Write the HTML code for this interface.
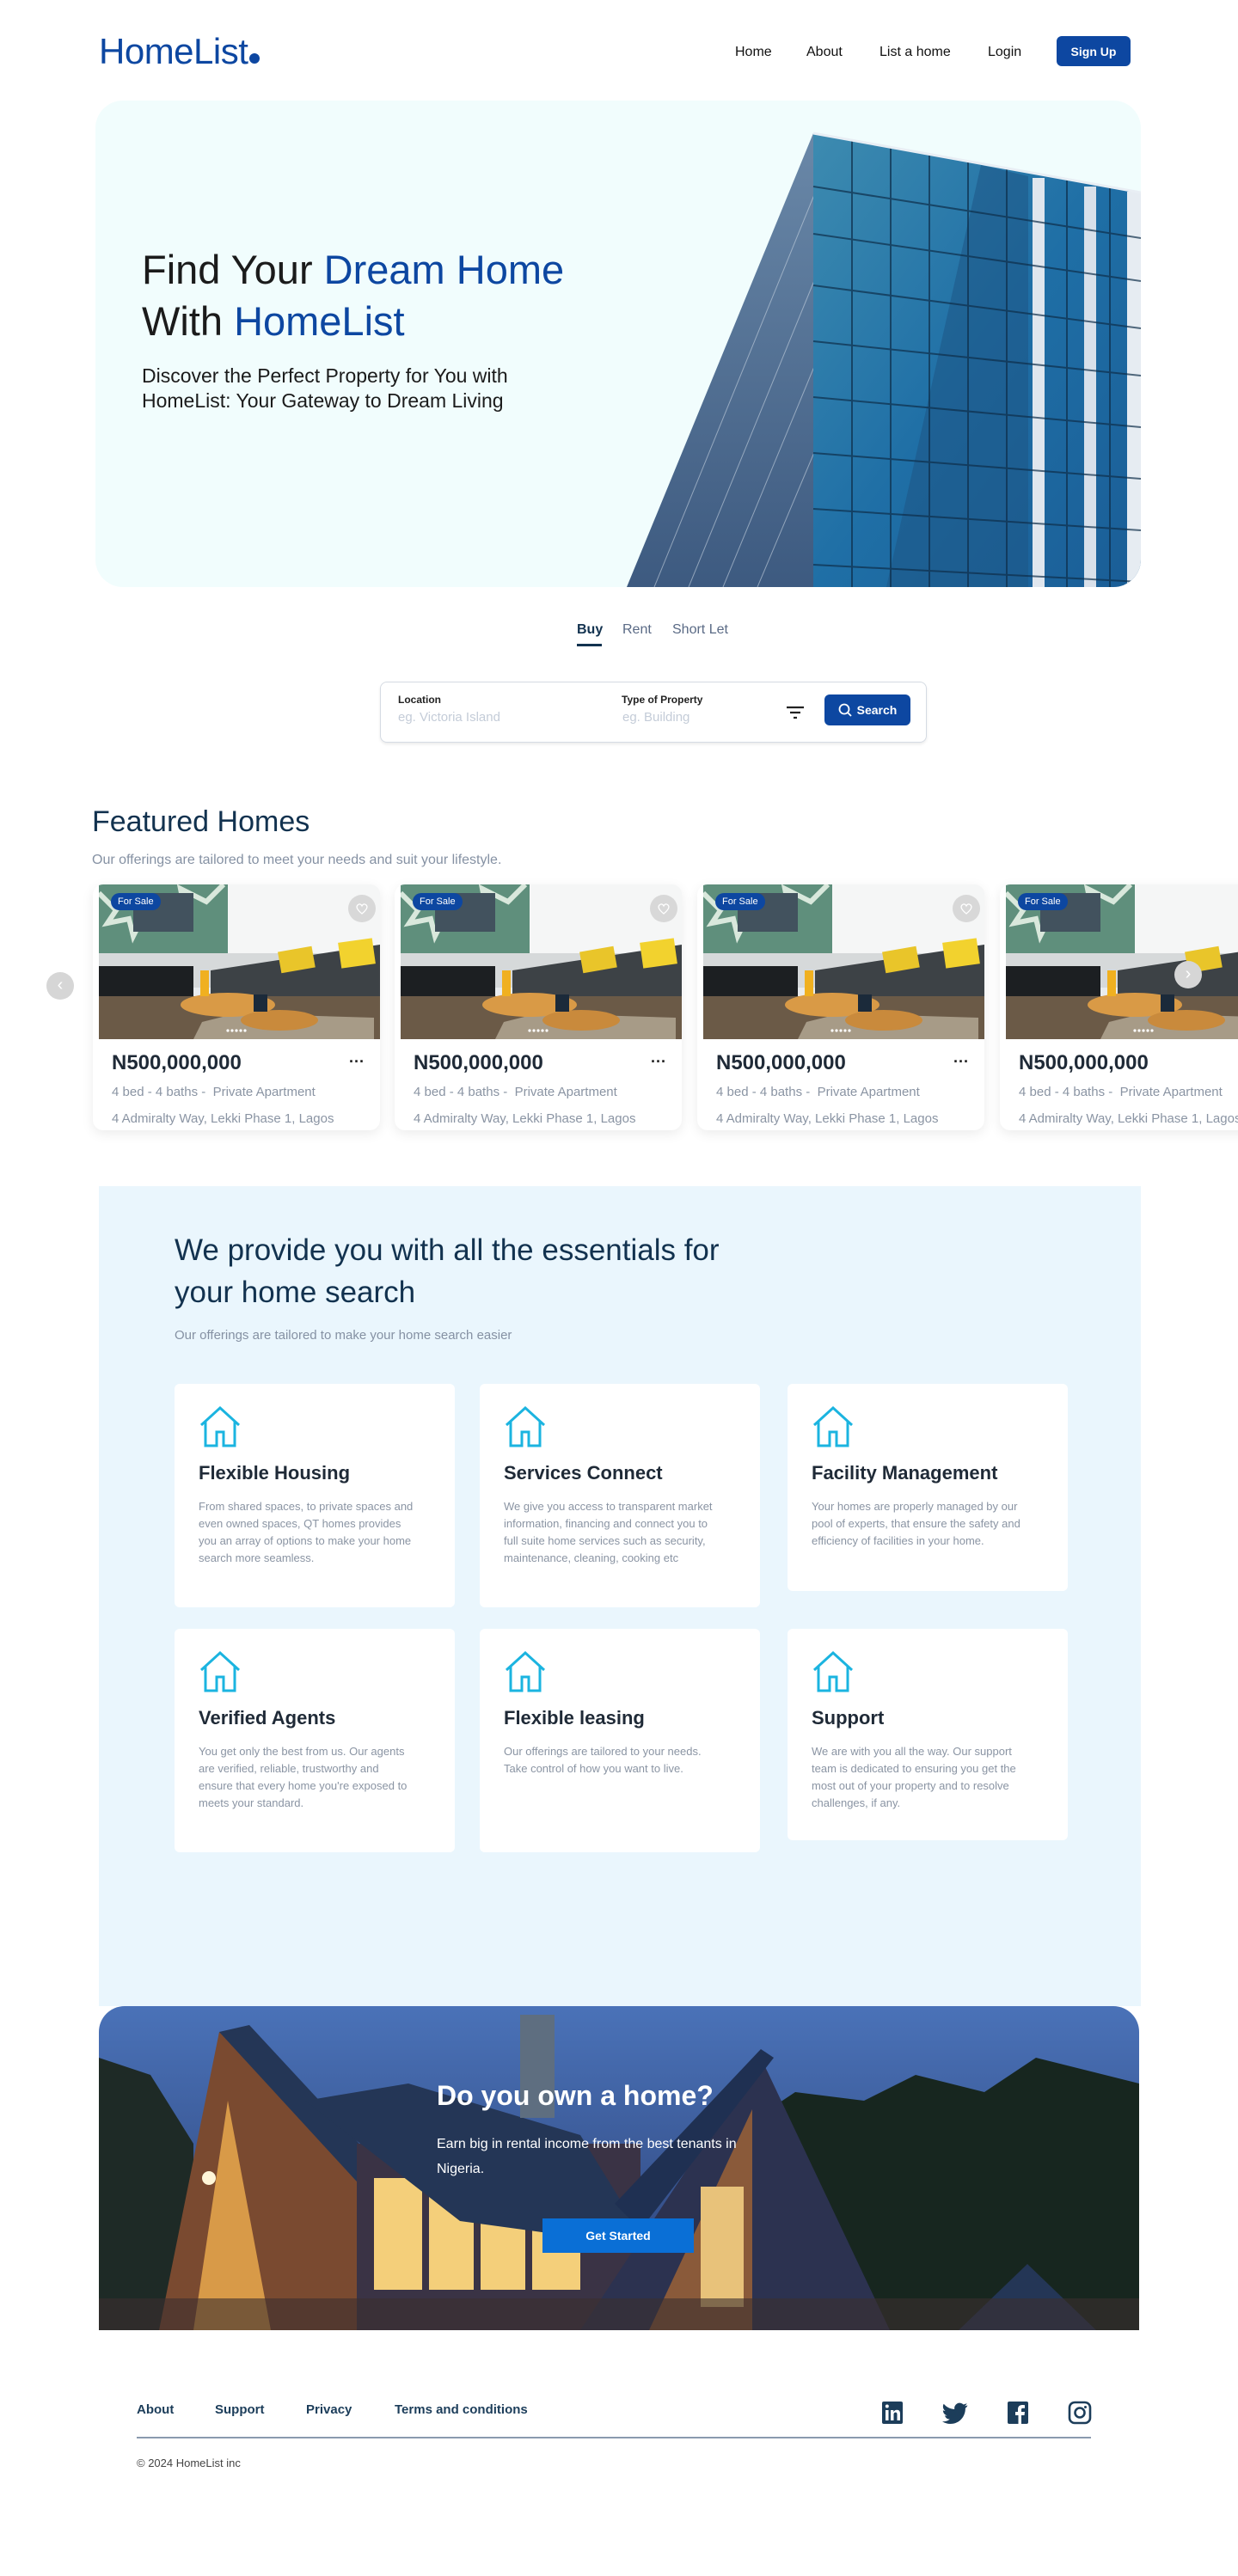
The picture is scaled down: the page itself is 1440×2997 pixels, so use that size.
<!DOCTYPE html>
<html><head><meta charset="utf-8"><style>
*{margin:0;padding:0;box-sizing:border-box}
body{width:1440px;height:2997px;background:#fff;font-family:"Liberation Sans",sans-serif;position:relative;overflow:hidden;color:#1a1a1a}
.abs{position:absolute}
.logo{left:115px;top:36px;font-size:42px;color:#0d47a1;letter-spacing:-0.5px}
.logo i{display:inline-block;width:12px;height:12px;border-radius:50%;background:#0d47a1;margin-left:2px}
.nav{top:52px;font-size:16px;color:#111}
.signup{left:1229px;top:42px;width:86px;height:35px;background:#0d47a1;color:#fff;border-radius:6px;font-size:14px;font-weight:bold;display:flex;align-items:center;justify-content:center}
.hero{left:111px;top:117px;width:1216px;height:566px;background:#f1fdfd;border-radius:32px;overflow:hidden}
.h1{left:165px;top:284px;font-size:47px;line-height:60px;color:#1b1b1b}
.h1 span{color:#0d47a1}
.hsub{left:165px;top:423px;font-size:23px;line-height:29px;color:#1b1b1b}
.tab{top:724px;font-size:16px;color:#5a6a85}
.search{left:442px;top:793px;width:636px;height:71px;border:1.5px solid #d5dbe3;border-radius:8px;box-shadow:0 2px 3px rgba(0,0,0,.08)}
.lbl{font-size:12px;font-weight:bold;color:#222;top:13px}
.ph{font-size:15px;color:#c4ccd8;top:32px}
.sbtn{left:516px;top:14px;width:100px;height:36px;background:#0d47a1;border-radius:6px;color:#fff;font-size:14px;font-weight:bold;display:flex;align-items:center;justify-content:center;gap:6px}
.fh{left:107px;top:937px;font-size:34px;color:#12324f}
.fs{left:107px;top:992px;font-size:16px;color:#8591a3}
.card{top:1029px;width:334px;height:286px;background:#fff;border-radius:12px;box-shadow:0 4px 14px rgba(0,0,0,.08);overflow:hidden}
.card .img{position:absolute;left:7px;top:0;width:327px;height:180px;overflow:hidden}
.price{position:absolute;left:22px;top:194px;font-size:24px;font-weight:bold;color:#1f2a37}
.dots{position:absolute;left:298px;top:196px;font-size:18px;font-weight:bold;color:#222}
.det{position:absolute;left:22px;font-size:15px;color:#8a94a3}
.badge{position:absolute;left:14px;top:10px;background:#0d47a1;color:#fff;font-size:11px;padding:4px 8px;border-radius:10px}
.heart{position:absolute;left:290px;top:12px;width:32px;height:32px;border-radius:50%;background:rgba(210,210,210,.85);display:flex;align-items:center;justify-content:center}
.svc{left:115px;top:1380px;width:1212px;height:954px;background:#eaf6fd}
.sh{left:203px;top:1430px;font-size:35px;line-height:49px;color:#12324f}
.ss{left:203px;top:1545px;font-size:15px;color:#8591a3}
.sc{background:#fff;border-radius:6px;width:326px;padding:26px 28px}
.sc h3{font-size:22px;color:#1f2a37;margin-top:12px;margin-bottom:16px}
.sc p{font-size:13px;line-height:20px;color:#8a94a3;width:250px}
.banner{left:115px;top:2334px;width:1210px;height:377px;border-radius:30px 30px 0 0;overflow:hidden}
.foot{top:2795px;font-size:15px;font-weight:bold;color:#1c3d5a}
</style></head><body>
<div class="abs logo">HomeList<i></i></div>
<div class="abs nav" style="left:855px">Home</div>
<div class="abs nav" style="left:938px">About</div>
<div class="abs nav" style="left:1023px">List a home</div>
<div class="abs nav" style="left:1149px">Login</div>
<div class="abs signup">Sign Up</div>

<div class="abs hero">
<svg width="1216" height="566" style="position:absolute;left:0;top:0">
<defs>
<linearGradient id="g1" x1="0" y1="0" x2="1" y2="1"><stop offset="0" stop-color="#3d8bb0"/><stop offset=".5" stop-color="#1f6fa6"/><stop offset="1" stop-color="#1a5d96"/></linearGradient>
<linearGradient id="g2" x1="0" y1="0" x2="0" y2="1"><stop offset="0" stop-color="#6a88a8"/><stop offset="1" stop-color="#3d5a80"/></linearGradient>
</defs>
<polygon points="618,566 835,38 835,566" fill="url(#g2)"/>
<g stroke="#c7d3e0" stroke-width="1" opacity=".6">
<line x1="650" y1="566" x2="840" y2="100"/><line x1="690" y1="566" x2="840" y2="200"/><line x1="730" y1="566" x2="840" y2="300"/><line x1="770" y1="566" x2="840" y2="400"/>
</g>
<polygon points="835,38 1216,107 1216,566 835,566" fill="url(#g1)"/>
<polygon points="1030,75 1085,88 1085,566 920,566" fill="#1d5585" opacity=".55"/>
<rect x="1090" y="90" width="14" height="476" fill="#dfe6ee"/>
<rect x="1150" y="100" width="14" height="466" fill="#d8e0ea"/>
<rect x="1200" y="106" width="16" height="460" fill="#e6ecf2"/>
<g stroke="#0e2e4a" stroke-width="2" opacity=".7">
<line x1="880" y1="46" x2="880" y2="566"/><line x1="925" y1="54" x2="925" y2="566"/><line x1="970" y1="62" x2="970" y2="566"/><line x1="1015" y1="70" x2="1015" y2="566"/><line x1="1060" y1="80" x2="1060" y2="566"/><line x1="1130" y1="92" x2="1130" y2="566"/><line x1="1180" y1="100" x2="1180" y2="566"/>
<line x1="835" y1="100" x2="1216" y2="160"/><line x1="835" y1="155" x2="1216" y2="210"/><line x1="835" y1="215" x2="1216" y2="265"/><line x1="835" y1="280" x2="1216" y2="320"/><line x1="835" y1="345" x2="1216" y2="380"/><line x1="835" y1="410" x2="1216" y2="440"/><line x1="835" y1="475" x2="1216" y2="500"/><line x1="835" y1="540" x2="1216" y2="560"/>
</g>
<line x1="835" y1="38" x2="1216" y2="107" stroke="#e8eef4" stroke-width="3"/>
</svg>
</div>
<div class="abs h1">Find Your <span>Dream Home</span><br>With <span>HomeList</span></div>
<div class="abs hsub">Discover the Perfect Property for You with<br>HomeList: Your Gateway to Dream Living</div>

<div class="abs tab" style="left:671px;color:#12324f;font-weight:bold">Buy</div>
<div class="abs" style="left:671px;top:749px;width:29px;height:3px;background:#12324f"></div>
<div class="abs tab" style="left:724px">Rent</div>
<div class="abs tab" style="left:782px">Short Let</div>

<div class="abs search">
<div class="abs lbl" style="left:20px">Location</div>
<div class="abs ph" style="left:20px">eg. Victoria Island</div>
<div class="abs lbl" style="left:280px">Type of Property</div>
<div class="abs ph" style="left:281px">eg. Building</div>
<svg class="abs" style="left:470px;top:25px" width="24" height="20"><path d="M2 4h20M6 10h12M10 16h4" stroke="#222" stroke-width="2.2"/></svg>
<div class="abs sbtn"><svg width="16" height="16"><circle cx="7" cy="7" r="5.5" stroke="#fff" stroke-width="1.8" fill="none"/><path d="M11 11l4 4" stroke="#fff" stroke-width="1.8"/></svg>Search</div>
</div>

<div class="abs fh">Featured Homes</div>
<div class="abs fs">Our offerings are tailored to meet your needs and suit your lifestyle.</div>

<svg width="0" height="0" style="position:absolute"><defs>
<symbol id="room" viewBox="0 0 327 180">
<rect width="327" height="180" fill="#e9ecee"/>
<rect x="0" y="0" width="150" height="80" fill="#5f8f7c"/>
<path d="M0 10l20 20-10 15 25-5 5 20 15-30 20 15 5-25 20 10-5-25 30 15 20-20" stroke="#d9e8dc" stroke-width="6" fill="none"/>
<rect x="150" y="0" width="177" height="90" fill="#f5f6f6"/>
<rect x="40" y="10" width="70" height="45" fill="#42525e"/>
<rect x="0" y="80" width="327" height="40" fill="#d6d9da"/>
<rect x="0" y="95" width="110" height="40" fill="#1c1f22"/>
<path d="M130 100l197-30v70H130z" fill="#3d4246"/>
<rect x="210" y="75" width="40" height="25" fill="#e9c52a" transform="rotate(-10 230 88)"/>
<rect x="280" y="65" width="40" height="30" fill="#f2d22e" transform="rotate(-8 300 80)"/>
<rect x="0" y="130" width="327" height="50" fill="#6b5a47"/>
<path d="M120 160l40-10 160 5v25H110z" fill="#a79b87"/>
<ellipse cx="150" cy="140" rx="55" ry="14" fill="#d99a46"/>
<ellipse cx="210" cy="158" rx="45" ry="12" fill="#c98a3c"/>
<rect x="118" y="100" width="10" height="30" fill="#f0b020"/>
<rect x="180" y="128" width="16" height="20" fill="#1b2a3a"/>
<g fill="#fff"><circle cx="150" cy="170" r="1.6"/><circle cx="155" cy="170" r="1.6"/><circle cx="160" cy="170" r="1.6"/><circle cx="165" cy="170" r="1.6"/><circle cx="170" cy="170" r="1.6"/></g>
</symbol></defs></svg>

<div class="abs card" style="left:108px"><div class="img"><svg width="327" height="180"><use href="#room"/></svg><div class="badge">For Sale</div><div class="heart"><svg width="16" height="16"><path d="M8 14C2 9 1 6 3 4s4-1 5 1c1-2 3-3 5-1s1 5-5 10z" stroke="#fff" stroke-width="1.3" fill="none"/></svg></div></div>
<div class="price">N500,000,000</div><div class="dots">···</div><div class="det" style="top:233px">4 bed - 4 baths -&nbsp; Private Apartment</div><div class="det" style="top:264px">4 Admiralty Way, Lekki Phase 1, Lagos</div></div>
<div class="abs card" style="left:459px"><div class="img"><svg width="327" height="180"><use href="#room"/></svg><div class="badge">For Sale</div><div class="heart"><svg width="16" height="16"><path d="M8 14C2 9 1 6 3 4s4-1 5 1c1-2 3-3 5-1s1 5-5 10z" stroke="#fff" stroke-width="1.3" fill="none"/></svg></div></div>
<div class="price">N500,000,000</div><div class="dots">···</div><div class="det" style="top:233px">4 bed - 4 baths -&nbsp; Private Apartment</div><div class="det" style="top:264px">4 Admiralty Way, Lekki Phase 1, Lagos</div></div>
<div class="abs card" style="left:811px"><div class="img"><svg width="327" height="180"><use href="#room"/></svg><div class="badge">For Sale</div><div class="heart"><svg width="16" height="16"><path d="M8 14C2 9 1 6 3 4s4-1 5 1c1-2 3-3 5-1s1 5-5 10z" stroke="#fff" stroke-width="1.3" fill="none"/></svg></div></div>
<div class="price">N500,000,000</div><div class="dots">···</div><div class="det" style="top:233px">4 bed - 4 baths -&nbsp; Private Apartment</div><div class="det" style="top:264px">4 Admiralty Way, Lekki Phase 1, Lagos</div></div>
<div class="abs card" style="left:1163px"><div class="img"><svg width="327" height="180"><use href="#room"/></svg><div class="badge">For Sale</div></div>
<div class="price">N500,000,000</div><div class="det" style="top:233px;white-space:nowrap">4 bed - 4 baths -&nbsp; Private Apartment</div><div class="det" style="top:264px;white-space:nowrap">4 Admiralty Way, Lekki Phase 1, Lagos</div></div>
<div class="abs" style="left:54px;top:1131px;width:32px;height:32px;border-radius:50%;background:#d6d6d6;color:#fff;font-size:20px;text-align:center;line-height:30px">‹</div>
<div class="abs" style="left:1366px;top:1118px;width:32px;height:32px;border-radius:50%;background:#d6d6d6;color:#fff;font-size:20px;text-align:center;line-height:30px">›</div>

<div class="abs svc"></div>
<div class="abs sh">We provide you with all the essentials for<br>your home search</div>
<div class="abs ss">Our offerings are tailored to make your home search easier</div>
<svg width="0" height="0" style="position:absolute"><defs><symbol id="hs" viewBox="0 0 50 48"><path d="M3 22L25 2l22 20M8 18v28h13V30h8v16h13V18" stroke="#1bb4e0" stroke-width="3" fill="none" stroke-linejoin="miter"/></symbol></defs></svg>
<div class="abs sc" style="left:203px;top:1610px;height:260px"><svg width="50" height="48"><use href="#hs"/></svg><h3>Flexible Housing</h3><p>From shared spaces, to private spaces and even owned spaces, QT homes provides you an array of options to make your home search more seamless.</p></div>
<div class="abs sc" style="left:558px;top:1610px;height:260px"><svg width="50" height="48"><use href="#hs"/></svg><h3>Services Connect</h3><p>We give you access to transparent market information, financing and connect you to full suite home services such as security, maintenance, cleaning, cooking etc</p></div>
<div class="abs sc" style="left:916px;top:1610px;height:241px"><svg width="50" height="48"><use href="#hs"/></svg><h3>Facility Management</h3><p>Your homes are properly managed by our pool of experts, that ensure the safety and efficiency of facilities in your home.</p></div>
<div class="abs sc" style="left:203px;top:1895px;height:260px"><svg width="50" height="48"><use href="#hs"/></svg><h3>Verified Agents</h3><p>You get only the best from us. Our agents are verified, reliable, trustworthy and ensure that every home you're exposed to meets your standard.</p></div>
<div class="abs sc" style="left:558px;top:1895px;height:260px"><svg width="50" height="48"><use href="#hs"/></svg><h3>Flexible leasing</h3><p>Our offerings are tailored to your needs. Take control of how you want to live.</p></div>
<div class="abs sc" style="left:916px;top:1895px;height:246px"><svg width="50" height="48"><use href="#hs"/></svg><h3>Support</h3><p>We are with you all the way. Our support team is dedicated to ensuring you get the most out of your property and to resolve challenges, if any.</p></div>

<div class="abs banner">
<svg width="1210" height="377">
<defs><linearGradient id="sky" x1="0" y1="0" x2="0" y2="1"><stop offset="0" stop-color="#4a72b8"/><stop offset="1" stop-color="#2b3f73"/></linearGradient></defs>
<rect width="1210" height="377" fill="url(#sky)"/>
<path d="M750 140l60-40 80 10 60-30 80 20 60-40 120 30v290H750z" fill="#17261f"/>
<path d="M0 60l60 20 50 80v220H0z" fill="#1e2a26"/>
<polygon points="70,377 140,30 330,210 330,377" fill="#7a4a30"/>
<polygon points="140,30 175,22 340,200 310,215" fill="#243656"/>
<polygon points="110,377 150,110 200,377" fill="#d89a48"/>
<rect x="300" y="160" width="330" height="217" fill="#3a3345"/>
<rect x="320" y="200" width="240" height="130" fill="#f4cf7a"/>
<g stroke="#3a3345" stroke-width="8"><line x1="380" y1="200" x2="380" y2="330"/><line x1="440" y1="200" x2="440" y2="330"/><line x1="500" y1="200" x2="500" y2="330"/></g>
<polygon points="240,110 420,250 640,280 560,150 360,90" fill="#243656"/>
<rect x="490" y="10" width="40" height="120" fill="#5e6e80"/>
<polygon points="560,377 770,60 920,377" fill="#2c3250"/>
<polygon points="640,377 760,120 760,377" fill="#8a5a3a"/>
<rect x="700" y="210" width="50" height="140" fill="#e8c27a"/>
<polygon points="600,230 770,50 785,60 630,260" fill="#1f3052"/>
<polygon points="1000,377 1080,300 1160,377" fill="#243656"/>
<rect x="0" y="340" width="1210" height="37" fill="#3b2e2e" opacity=".6"/>
<circle cx="128" cy="200" r="8" fill="#fff6d8"/>
</svg>
<div class="abs" style="left:393px;top:86px;font-size:32px;font-weight:bold;color:#fff">Do you own a home?</div>
<div class="abs" style="left:393px;top:146px;font-size:16px;line-height:29px;color:#fff;width:360px">Earn big in rental income from the best tenants in Nigeria.</div>
<div class="abs" style="left:516px;top:247px;width:176px;height:40px;background:#0a6fd6;color:#fff;font-size:14px;font-weight:bold;display:flex;align-items:center;justify-content:center">Get Started</div>
</div>

<div class="abs foot" style="left:159px">About</div>
<div class="abs foot" style="left:250px">Support</div>
<div class="abs foot" style="left:356px">Privacy</div>
<div class="abs foot" style="left:459px">Terms and conditions</div>
<svg class="abs" style="left:1025px;top:2793px" width="26" height="28"><rect x="1" y="1" width="24" height="26" rx="2" fill="#1c3d5a"/><rect x="5" y="11" width="3.5" height="12" fill="#fff"/><circle cx="6.8" cy="6.5" r="2" fill="#fff"/><path d="M11 11h3.3v2c1-1.6 2.5-2.3 4-2.3 3 0 3.7 2 3.7 4.6V23h-3.5v-6.8c0-1.5-.4-2.6-1.8-2.6s-2.2 1.1-2.2 2.6V23H11z" fill="#fff"/></svg>
<svg class="abs" style="left:1096px;top:2795px" width="30" height="26" viewBox="0 0 24 20"><path d="M23.5 2.3c-.9.4-1.8.6-2.8.8 1-.6 1.8-1.5 2.1-2.7-.9.6-2 1-3.1 1.2A4.9 4.9 0 0 0 11.4 6C7.3 5.8 3.8 3.9 1.4 1 0 3.3.8 6.2 2.9 7.6c-.8 0-1.600-.3-2.2-.6 0 2.4 1.7 4.4 3.9 4.8-.7.2-1.5.2-2.2.1.6 2 2.4 3.4 4.6 3.4A9.8 9.8 0 0 1 0 17.4 13.9 13.9 0 0 0 7.5 19.6c9.1 0 14-7.5 14-14v-.6c1-.7 1.8-1.6 2-2.700z" fill="#1c3d5a"/></svg>
<svg class="abs" style="left:1171px;top:2793px" width="26" height="28"><rect x="1" y="1" width="24" height="26" rx="2" fill="#1c3d5a"/><path d="M17 28V17h3.5l.5-4H17v-2.5c0-1.1.4-1.8 2-1.8h2V5.2c-.4 0-1.6-.2-3-.2-3 0-5 1.8-5 5.1V13H10v4h3.5v11z" fill="#fff"/></svg>
<svg class="abs" style="left:1242px;top:2793px" width="28" height="28"><rect x="2" y="2" width="24" height="24" rx="6" stroke="#1c3d5a" stroke-width="2.6" fill="none"/><circle cx="14" cy="14" r="5.5" stroke="#1c3d5a" stroke-width="2.6" fill="none"/><circle cx="20.5" cy="7.5" r="1.5" fill="#1c3d5a"/></svg>
<div class="abs" style="left:159px;top:2835px;width:1110px;height:1.5px;background:#8a9aae"></div>
<div class="abs" style="left:159px;top:2858px;font-size:13px;color:#444">© 2024 HomeList inc</div>
</body></html>
